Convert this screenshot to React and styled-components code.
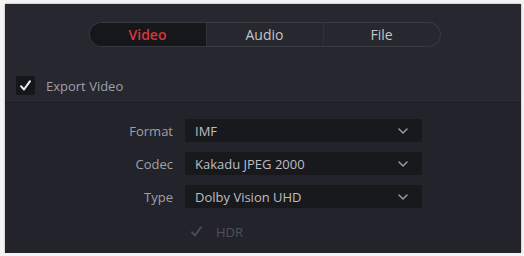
import React from 'react'
import styled, { createGlobalStyle } from 'styled-components'

const GlobalStyle = createGlobalStyle`
  html, body {
    margin: 0;
    padding: 0;
    background: #f4f4f5;
  }
  body {
    font-family: "Open Sans", "Liberation Sans", sans-serif;
  }
`

const Panel = styled.div`
  margin: 4px 0 0 5px;
  width: 516px;
  height: 249px;
  background: #23242b;
  display: flex;
  flex-direction: column;
  box-shadow: 0 0 2px rgba(0, 0, 0, 0.35);
`

const TopSection = styled.div`
  height: 98px;
  background: #26272f;
  border-bottom: 1px solid #1c1d22;
  display: flex;
  flex-direction: column;
`

const TabBar = styled.div`
  align-self: center;
  margin-top: 18px;
  margin-left: 3px;
  width: 352px;
  height: 25px;
  display: flex;
  border: 1px solid #383a42;
  border-radius: 13px;
  overflow: hidden;
  box-sizing: border-box;
`

const Tab = styled.div`
  flex: 1;
  display: flex;
  align-items: center;
  justify-content: center;
  font-size: 14px;
  font-weight: ${p => (p.$active ? 600 : 400)};
  color: ${p => (p.$active ? '#d6383b' : '#c4c4c8')};
  background: ${p => (p.$active ? '#16171b' : 'transparent')};
  border-left: ${p => (p.$first ? 'none' : '1px solid #30323a')};
`

const CheckRow = styled.label`
  display: flex;
  align-items: center;
  gap: 11px;
  margin: 29px 0 0 11px;
  font-size: 13px;
  color: ${p => (p.$dim ? '#4f5159' : '#9fa0a7')};
`

const Box = styled.span`
  width: 19px;
  height: 19px;
  box-sizing: border-box;
  border-radius: 2px;
  background: ${p => (p.$dim ? 'transparent' : '#15161a')};
  display: flex;
  align-items: center;
  justify-content: center;
`

const Form = styled.div`
  display: grid;
  grid-template-columns: 168px 237px;
  column-gap: 12px;
  row-gap: 10px;
  padding-top: 16px;
  align-items: center;
`

const Label = styled.div`
  text-align: right;
  font-size: 13px;
  color: #9fa0a7;
`

const Select = styled.div`
  height: 23px;
  box-sizing: border-box;
  background: #18191d;
  border-radius: 2px;
  display: flex;
  align-items: center;
  justify-content: space-between;
  padding: 0 14px 0 10px;
  font-size: 13px;
  color: #bdbec3;
`

const HdrRow = styled(CheckRow)`
  margin: 14px 0 0 182px;
  gap: 10px;
`

const Check = ({ color }) => (
  <svg width="13" height="13" viewBox="0 0 13 13">
    <path d="M2 7.2 L5 10.5 L11 2.2" fill="none" stroke={color} strokeWidth="2" strokeLinecap="round" strokeLinejoin="round" />
  </svg>
)

const Chevron = () => (
  <svg width="10" height="6" viewBox="0 0 10 6">
    <path d="M1 1 L5 5 L9 1" fill="none" stroke="#9a9ba2" strokeWidth="1.5" strokeLinecap="round" strokeLinejoin="round" />
  </svg>
)

const fields = [
  ['Format', 'IMF'],
  ['Codec', 'Kakadu JPEG 2000'],
  ['Type', 'Dolby Vision UHD'],
]

export default function App() {
  return (
    <>
      <GlobalStyle />
      <Panel>
        <TopSection>
          <TabBar>
            <Tab $active $first>Video</Tab>
            <Tab>Audio</Tab>
            <Tab>File</Tab>
          </TabBar>
          <CheckRow>
            <Box><Check color="#f2f2f2" /></Box>
            Export Video
          </CheckRow>
        </TopSection>
        <Form>
          {fields.map(([label, value]) => (
            <React.Fragment key={label}>
              <Label>{label}</Label>
              <Select>
                <span>{value}</span>
                <Chevron />
              </Select>
            </React.Fragment>
          ))}
        </Form>
        <HdrRow $dim>
          <Box $dim><Check color="#4a4c54" /></Box>
          HDR
        </HdrRow>
      </Panel>
    </>
  )
}
